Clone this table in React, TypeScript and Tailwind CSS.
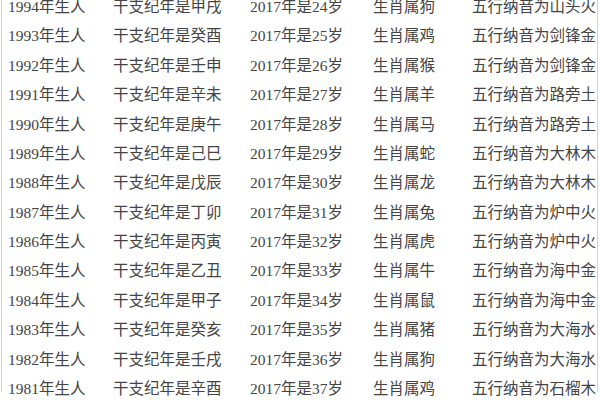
const rows = [
  ["1994", "甲戌", "24", "狗", "山头火"],
  ["1993", "癸酉", "25", "鸡", "剑锋金"],
  ["1992", "壬申", "26", "猴", "剑锋金"],
  ["1991", "辛未", "27", "羊", "路旁土"],
  ["1990", "庚午", "28", "马", "路旁土"],
  ["1989", "己巳", "29", "蛇", "大林木"],
  ["1988", "戊辰", "30", "龙", "大林木"],
  ["1987", "丁卯", "31", "兔", "炉中火"],
  ["1986", "丙寅", "32", "虎", "炉中火"],
  ["1985", "乙丑", "33", "牛", "海中金"],
  ["1984", "甲子", "34", "鼠", "海中金"],
  ["1983", "癸亥", "35", "猪", "大海水"],
  ["1982", "壬戌", "36", "狗", "大海水"],
  ["1981", "辛酉", "37", "鸡", "石榴木"],
];

export default function App() {
  return (
    <div className="w-[600px] h-[400px] overflow-hidden bg-white">
      <div className="h-full ml-[1px] mr-[2px] border-x border-[#d4d4d4]">
        <div className="-mt-[8px] flex flex-col text-[15.5px] text-[#444] font-['Liberation_Serif','Noto_Sans_CJK_SC',serif]">
          {rows.map(([year, gz, age, animal, element]) => (
            <div
              key={year}
              className="grid h-[29.4px] grid-cols-[111px_137px_123px_99px_1fr] items-center whitespace-nowrap leading-none"
            >
              <span className="pl-[6px]">{year}年生人</span>
              <span>干支纪年是{gz}</span>
              <span>2017年是{age}岁</span>
              <span>生肖属{animal}</span>
              <span>五行纳音为{element}</span>
            </div>
          ))}
        </div>
      </div>
    </div>
  );
}
